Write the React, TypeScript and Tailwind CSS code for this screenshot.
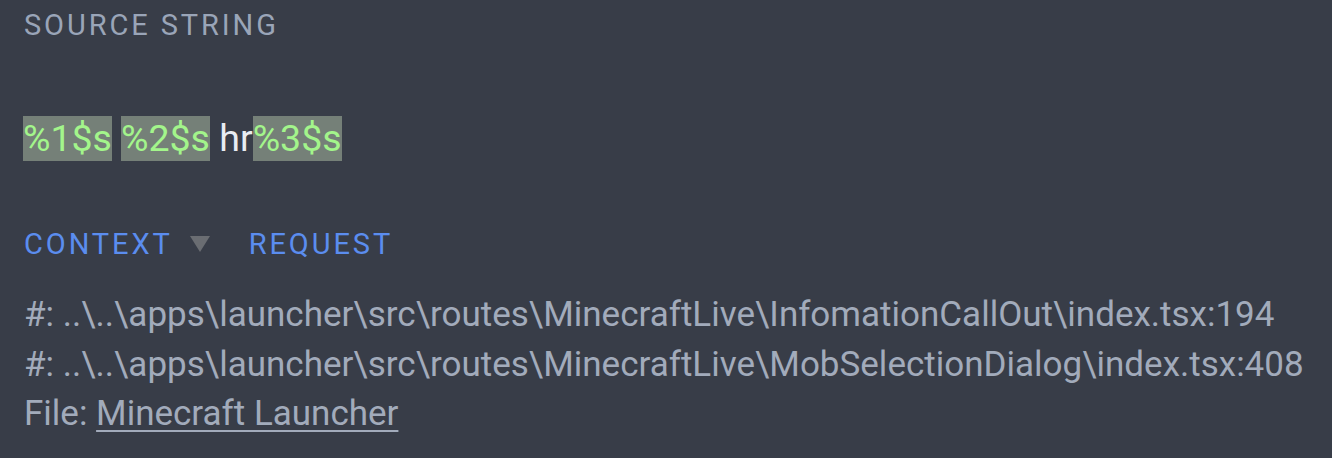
export default function App() {
  const refs = [
    '#: ..\\..\\apps\\launcher\\src\\routes\\MinecraftLive\\InfomationCallOut\\index.tsx:194',
    '#: ..\\..\\apps\\launcher\\src\\routes\\MinecraftLive\\MobSelectionDialog\\index.tsx:408',
  ]

  return (
    <div className="h-[458px] w-[1332px] bg-[#383d48] px-6 pt-[5px] font-['Roboto',sans-serif]">
      <div className="text-[29px] leading-[40px] tracking-[0.1em] text-[#9aa5b8]">SOURCE STRING</div>

      <div className="mt-[71px] flex items-center text-[37.5px] leading-[45px] text-[#e8ecf2]">
        <span className="-ml-px bg-[#758078] text-[#a3f58b]">%1$s</span>
        <span className="inline-block w-[9px] whitespace-pre"> </span>
        <span className="bg-[#758078] text-[#a3f58b]">%2$s</span>
        <span className="whitespace-pre"> hr</span>
        <span className="bg-[#758078] text-[#a3f58b]">%3$s</span>
      </div>

      <div className="mt-[63px] flex items-center text-[29px] leading-[40px] tracking-[0.1em] text-[#5b8def]">
        <span>CONTEXT</span>
        <svg className="ml-[16px] h-[18px] w-[22px]" viewBox="0 0 22 18" aria-hidden>
          <path d="M1 1 H21 L11 17 Z" fill="#6a6d72" />
        </svg>
        <span className="ml-[38px]">REQUEST</span>
      </div>

      <div className="mt-[26px] text-[35px] leading-[49.5px] text-[#a2abbb]">
        {refs.map((r) => (
          <div key={r}>{r}</div>
        ))}
        <div>
          File: <span className="underline decoration-2 underline-offset-[5px]">Minecraft Launcher</span>
        </div>
      </div>
    </div>
  )
}
